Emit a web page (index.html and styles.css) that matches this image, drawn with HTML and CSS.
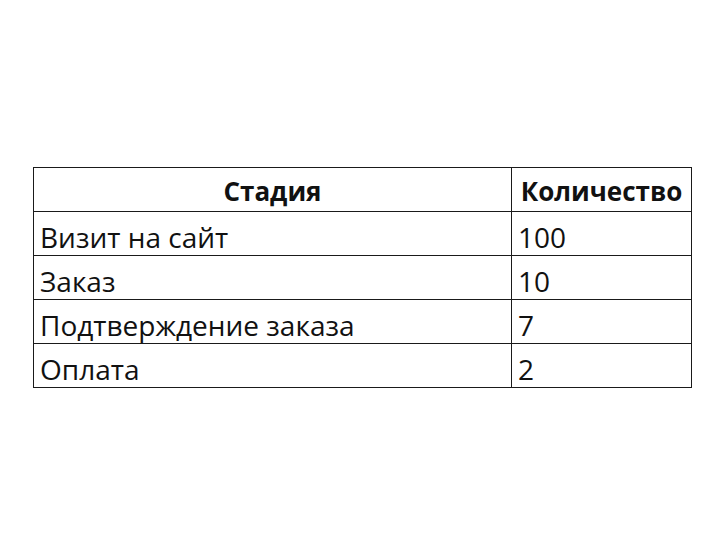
FILE: index.html
```html
<!DOCTYPE html>
<html>
<head>
<meta charset="utf-8">
<link rel="stylesheet" href="styles.css">
</head>
<body>
<div class="page">
  <table class="grid">
    <thead>
      <tr><th class="c1">Стадия</th><th class="c2">Количество</th></tr>
    </thead>
    <tbody>
      <tr><td>Визит на сайт</td><td>100</td></tr>
      <tr><td>Заказ</td><td>10</td></tr>
      <tr><td>Подтверждение заказа</td><td>7</td></tr>
      <tr><td>Оплата</td><td>2</td></tr>
    </tbody>
  </table>
</div>
</body>
</html>
```
FILE: styles.css
```css
html, body {
  margin: 0;
  padding: 0;
  background: #ffffff;
}
.page {
  width: 720px;
  height: 540px;
  padding: 167px 0 0 33px;
  box-sizing: border-box;
}
.grid {
  border-collapse: collapse;
  font-family: "Open Sans", "Liberation Sans", sans-serif;
  font-size: 28px;
  color: #111;
  width: 658px;
  table-layout: fixed;
}
.grid th, .grid td {
  border: 1px solid #1a1a1a;
  height: 44px;
  padding: 0 6px;
  box-sizing: border-box;
  line-height: 1;
}
.grid th {
  text-align: center;
  font-weight: 700;
  font-size: 26px;
  padding-top: 2px;
}
.grid td {
  text-align: left;
  padding-top: 6px;
}
.c1 { width: 478px; }
.c2 { width: 180px; }
```
